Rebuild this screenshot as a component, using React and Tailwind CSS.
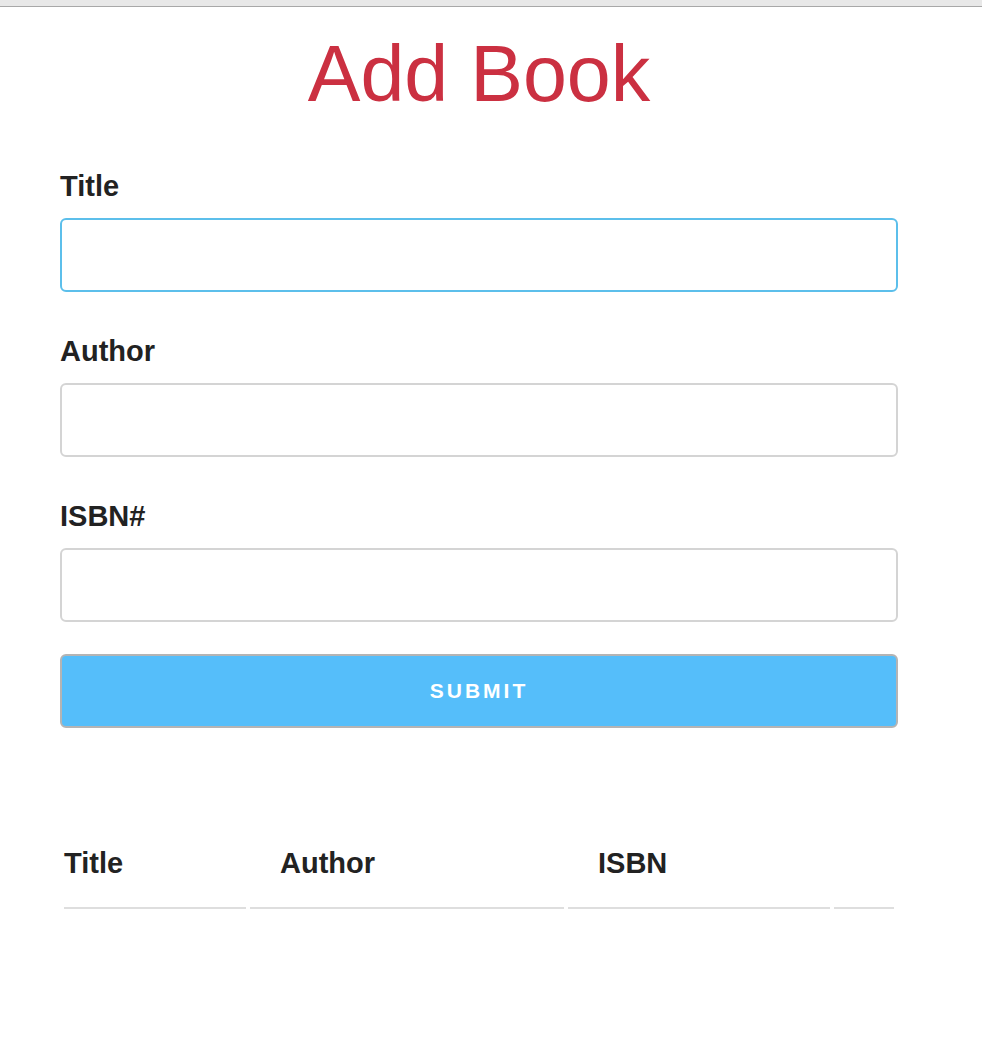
import React from "react";

export default function App() {
  const font = { fontFamily: '"Liberation Sans", Arial, Helvetica, sans-serif' };
  return (
    <div className="min-h-[1046px] w-full bg-white text-[#222222]" style={font}>
      <div className="h-[7px] bg-[#e8e8e8] border-b border-[#a8a8a8]" />
      <div className="ml-[60px] w-[838px]">
        <h1 className="mt-[19px] text-center text-[79px] leading-[96px] font-normal text-[#cb3041]">
          Add Book
        </h1>
        <form className="mt-[47px] flex flex-col" onSubmit={(e) => e.preventDefault()}>
          <label className="text-[29px] leading-[34px] font-bold">Title</label>
          <input
            type="text"
            className="mt-[15px] h-[74px] w-full rounded-[6px] border-2 border-[#5cbfeb] bg-white px-3 text-[20px] outline-none"
          />
          <label className="mt-[42px] text-[29px] leading-[34px] font-bold">Author</label>
          <input
            type="text"
            className="mt-[15px] h-[74px] w-full rounded-[6px] border-2 border-[#d4d4d4] bg-white px-3 text-[20px] outline-none"
          />
          <label className="mt-[42px] text-[29px] leading-[34px] font-bold">ISBN#</label>
          <input
            type="text"
            className="mt-[15px] h-[74px] w-full rounded-[6px] border-2 border-[#d4d4d4] bg-white px-3 text-[20px] outline-none"
          />
          <button
            type="submit"
            className="mt-[32px] h-[74px] w-full rounded-[6px] border-2 border-[#b4b4b4] bg-[#55befa] text-[21px] font-bold tracking-[3px] text-white"
          >
            SUBMIT
          </button>
        </form>
        <table className="mt-[118px] w-full border-separate border-spacing-x-[4px] border-spacing-y-0">
          <thead>
            <tr>
              <th className="w-[182px] border-b-2 border-[#dedede] pb-[27px] text-left text-[29px] leading-[34px] font-bold">
                Title
              </th>
              <th className="w-[314px] border-b-2 border-[#dedede] pb-[27px] pl-[30px] text-left text-[29px] leading-[34px] font-bold">
                Author
              </th>
              <th className="w-[262px] border-b-2 border-[#dedede] pb-[27px] pl-[30px] text-left text-[29px] leading-[34px] font-bold">
                ISBN
              </th>
              <th className="border-b-2 border-[#dedede] pb-[27px]"></th>
            </tr>
          </thead>
          <tbody></tbody>
        </table>
      </div>
    </div>
  );
}
